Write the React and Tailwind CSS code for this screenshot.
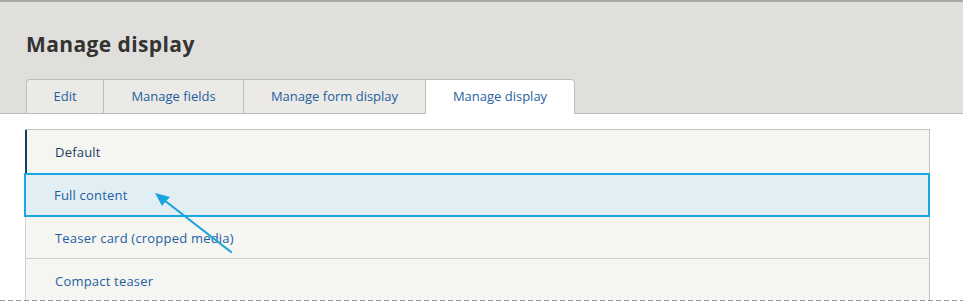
export default function App() {
  const tabs = [
    { label: "Edit", w: "w-[77px]", cls: "rounded-tl-[4px]" },
    { label: "Manage fields", w: "w-[140px]", cls: "" },
    { label: "Manage form display", w: "w-[182px]", cls: "" },
  ];
  return (
    <div className="relative w-[963px] h-[302px] overflow-hidden bg-white font-['Open_Sans',sans-serif]">
      <div className="bg-[#e0dfdb] border-t-2 border-[#a9a8a4] border-b border-b-[#bdbcb8]">
        <h1 className="pl-[26px] pt-[29px] text-[21px] leading-[26px] tracking-[0.4px] font-bold text-[#333333]">
          Manage display
        </h1>
        <div className="flex items-end pl-[26px] mt-[22px] h-[34px]">
          {tabs.map((t) => (
            <div
              key={t.label}
              className={`${t.w} ${t.cls} h-[34px] flex items-center justify-center border-l border-t border-[#bfbfba] bg-[#ebeae6] text-[13px] text-[#1f5f9f]`}
            >
              {t.label}
            </div>
          ))}
          <div className="w-[150px] h-[35px] -mb-px pb-px flex items-center justify-center border-l border-t border-r border-[#bfbfba] rounded-tr-[4px] bg-white text-[13px] text-[#1f5f9f]">
            Manage display
          </div>
        </div>
      </div>
      <div className="pt-[15px] pl-[25px] h-[186px] overflow-hidden">
        <div className="w-[905px] h-[175px] border-t border-r border-[#c4c4c2] bg-[#f5f5f2] flex flex-col text-[13px] tracking-[0.2px]">
          <div className="h-[43px] flex items-center pt-[2px] pl-[28px] border-l-2 border-[#123f63] text-[#1b3d62]">
            Default
          </div>
          <div className="h-[44px] -ml-px -mr-px flex items-center pt-[2px] pl-[28px] border-2 border-[#1aa7e2] bg-[#e1eef3] text-[#1f5f9f]">
            Full content
          </div>
          <div className="h-[42px] flex items-center pt-[2px] pl-[29px] border-l border-b border-[#cfcfcc] text-[#1f5f9f]">
            Teaser card (cropped media)
          </div>
          <div className="h-[44px] flex items-center pt-[2px] pl-[29px] border-l border-[#cfcfcc] text-[#1f5f9f]">
            Compact teaser
          </div>
        </div>
      </div>
      <div className="absolute left-0 top-[300px] w-full h-[2px] bg-white">
        <div className="h-px w-full bg-[repeating-linear-gradient(90deg,#9a9a9a_0_5px,transparent_5px_8px)]" />
      </div>
      <svg className="absolute left-0 top-0" width="963" height="302" viewBox="0 0 963 302">
        <line x1="231" y1="252" x2="164" y2="200" stroke="#1ba3e0" strokeWidth="2.2" strokeLinecap="round" />
        <path d="M155 193 L170 197 L165.5 201.5 L162 206 Z" fill="#1ba3e0" />
      </svg>
    </div>
  );
}
